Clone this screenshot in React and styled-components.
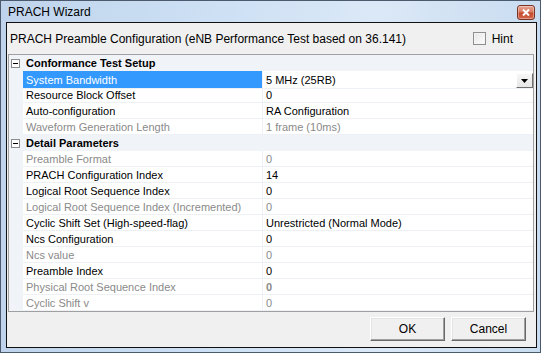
import React from "react";
import styled, { createGlobalStyle } from "styled-components";

const GlobalStyle = createGlobalStyle`
  html, body { margin: 0; padding: 0; background: #fff; }
  body { font-family: "Liberation Sans", Arial, sans-serif; }
  * { box-sizing: border-box; }
`;

const Window = styled.div`
  width: 541px;
  height: 353px;
  border: 1px solid #4b5a6c;
  background: linear-gradient(90deg, #bfd4ec 0%, #cde0f4 40%, #dbe8f7 70%, #c9dcf0 100%);
  padding: 0 3px 4px 5px;
  display: flex;
  flex-direction: column;
`;

const TitleBar = styled.div`
  height: 21px;
  display: flex;
  align-items: center;
  padding: 0 2px 0 2px;
  font-size: 12px;
  color: #000;
`;

const Title = styled.span`
  flex: 1;
  padding-top: 1px;
`;

const CloseButton = styled.div`
  width: 18px;
  height: 15px;
  margin-top: 1px;
  border: 1px solid #7a3324;
  border-radius: 3px;
  background: linear-gradient(180deg, #e9a593 0%, #d77a60 45%, #c54a2c 55%, #d2694c 100%);
  display: flex;
  align-items: center;
  justify-content: center;
  box-shadow: inset 0 0 0 1px rgba(255, 255, 255, 0.35);
`;

const Client = styled.div`
  flex: 1;
  border: 1px solid #111;
  background: #f0f0f0;
  display: flex;
  flex-direction: column;
`;

const Header = styled.div`
  height: 31px;
  display: flex;
  align-items: center;
  padding: 0 23px 0 3px;
  font-size: 12px;
  color: #000;
`;

const HeaderText = styled.span`
  flex: 1;
`;

const HintLabel = styled.label`
  display: flex;
  align-items: center;
  gap: 6px;
`;

const CheckBox = styled.span`
  width: 13px;
  height: 13px;
  border: 1px solid #8e8f8f;
  background: linear-gradient(135deg, #e6e6e6 0%, #fdfdfd 100%);
  box-shadow: inset 0 0 0 1px #f4f4f4;
`;

const Grid = styled.div`
  margin: 0 2px 0 1px;
  height: 258px;
  border: 1px solid #a0a0a0;
  background: #fff;
  font-size: 11px;
  overflow: hidden;
`;

const Row = styled.div`
  height: 16px;
  display: grid;
  grid-template-columns: 14px 239px 1fr;
  background: ${({ $category }) => ($category ? "#f0f3f8" : "#fff")};
`;

const Margin = styled.div`
  background: #f0f3f8;
  display: flex;
  align-items: center;
  padding-left: 2px;
`;

const NameCell = styled.div`
  display: flex;
  align-items: center;
  padding-left: 3px;
  white-space: nowrap;
  border-bottom: ${({ $category }) => ($category ? "none" : "1px solid #edf0f5")};
  background: ${({ $selected }) => ($selected ? "#3399ff" : "transparent")};
  color: ${({ $selected, $disabled }) =>
    $selected ? "#fff" : $disabled ? "#8a8a8a" : "#000"};
  font-weight: ${({ $category }) => ($category ? "bold" : "normal")};
  ${({ $category }) => ($category ? "grid-column: 2 / 4;" : "")}
`;

const ValueCell = styled.div`
  display: flex;
  align-items: center;
  padding-left: 3px;
  border-left: 1px solid #edf0f5;
  border-bottom: 1px solid #edf0f5;
  white-space: nowrap;
  color: ${({ $disabled }) => ($disabled ? "#8a8a8a" : "#000")};
  font-weight: ${({ $bold }) => ($bold ? "bold" : "normal")};
`;

const DropButton = styled.div`
  margin-left: auto;
  width: 17px;
  height: 15px;
  margin-top: 2px;
  background: linear-gradient(180deg, #f7f7f7 0%, #e6e6e6 100%);
  border: 1px solid;
  border-color: #fff #6f6f6f #6f6f6f #fff;
  display: flex;
  align-items: center;
  justify-content: center;
`;

const Footer = styled.div`
  flex: 1;
  display: flex;
  justify-content: flex-end;
  align-items: flex-start;
  gap: 6px;
  padding: 5px 10px 0 0;
`;

const Button = styled.button`
  width: 75px;
  height: 24px;
  font-family: "Liberation Sans", Arial, sans-serif;
  font-size: 12px;
  color: #000;
  background: #f0f0f0;
  border: 1px solid;
  border-color: #fff #696969 #696969 #fff;
  box-shadow: inset -1px -1px 0 #a0a0a0, inset 1px 1px 0 #e3e3e3;
  padding: 0;
`;

const Expander = () => (
  <svg width="9" height="9" viewBox="0 0 9 9">
    <rect x="0.5" y="0.5" width="8" height="8" fill="#fff" stroke="#8b8b8b" />
    <rect x="2" y="4" width="5" height="1" fill="#000" />
  </svg>
);

const rows = [
  { category: "Conformance Test Setup" },
  { name: "System Bandwidth", value: "5 MHz (25RB)", selected: true, dropdown: true },
  { name: "Resource Block Offset", value: "0" },
  { name: "Auto-configuration", value: "RA Configuration" },
  { name: "Waveform Generation Length", value: "1 frame (10ms)", disabled: true },
  { category: "Detail Parameters" },
  { name: "Preamble Format", value: "0", disabled: true },
  { name: "PRACH Configuration Index", value: "14" },
  { name: "Logical Root Sequence Index", value: "0" },
  { name: "Logical Root Sequence Index (Incremented)", value: "0", disabled: true },
  { name: "Cyclic Shift Set (High-speed-flag)", value: "Unrestricted (Normal Mode)" },
  { name: "Ncs Configuration", value: "0" },
  { name: "Ncs value", value: "0", disabled: true },
  { name: "Preamble Index", value: "0" },
  { name: "Physical Root Sequence Index", value: "0", disabled: true, bold: true },
  { name: "Cyclic Shift v", value: "0", disabled: true },
];

export default function App() {
  return (
    <>
      <GlobalStyle />
      <Window>
        <TitleBar>
          <Title>PRACH Wizard</Title>
          <CloseButton>
            <svg width="8" height="7" viewBox="0 0 8 7">
              <path d="M1 0.5 L7 6.5 M7 0.5 L1 6.5" stroke="#fff" strokeWidth="2" />
            </svg>
          </CloseButton>
        </TitleBar>
        <Client>
          <Header>
            <HeaderText>PRACH Preamble Configuration (eNB Performance Test based on 36.141)</HeaderText>
            <HintLabel>
              <CheckBox />
              Hint
            </HintLabel>
          </Header>
          <Grid>
            {rows.map((r, i) =>
              r.category ? (
                <Row key={i} $category>
                  <Margin>
                    <Expander />
                  </Margin>
                  <NameCell $category>{r.category}</NameCell>
                </Row>
              ) : (
                <Row key={i}>
                  <Margin />
                  <NameCell $selected={r.selected} $disabled={r.disabled}>
                    {r.name}
                  </NameCell>
                  <ValueCell $disabled={r.disabled} $bold={r.bold}>
                    {r.value}
                    {r.dropdown && (
                      <DropButton>
                        <svg width="7" height="4" viewBox="0 0 7 4">
                          <path d="M0 0 H7 L3.5 4 Z" fill="#000" />
                        </svg>
                      </DropButton>
                    )}
                  </ValueCell>
                </Row>
              )
            )}
          </Grid>
          <Footer>
            <Button>OK</Button>
            <Button>Cancel</Button>
          </Footer>
        </Client>
      </Window>
    </>
  );
}
